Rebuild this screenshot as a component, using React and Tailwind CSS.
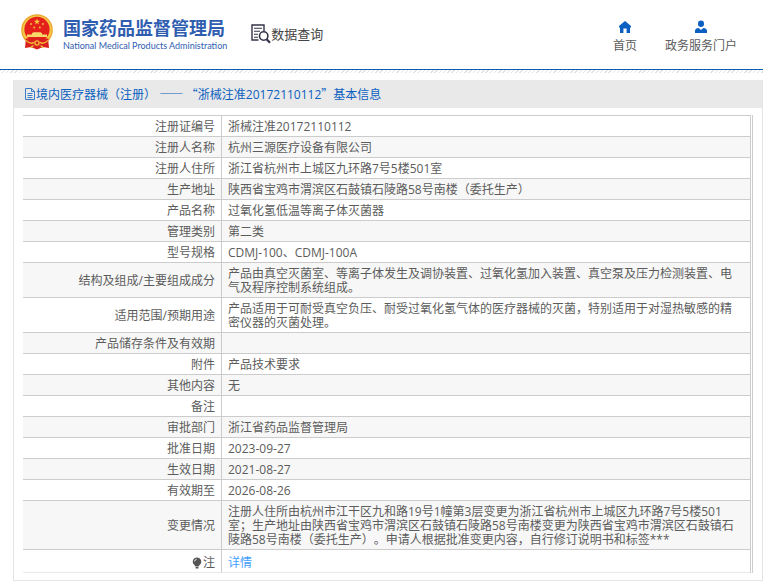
import { clsx } from 'clsx';

const NUMBER = '浙械注准20172110112';

const ROWS = [
  { label: '注册证编号', value: NUMBER },
  { label: '注册人名称', value: '杭州三源医疗设备有限公司' },
  { label: '注册人住所', value: '浙江省杭州市上城区九环路7号5楼501室' },
  { label: '生产地址', value: '陕西省宝鸡市渭滨区石鼓镇石陵路58号南楼（委托生产）' },
  { label: '产品名称', value: '过氧化氢低温等离子体灭菌器' },
  { label: '管理类别', value: '第二类' },
  { label: '型号规格', value: 'CDMJ-100、CDMJ-100A' },
  {
    label: '结构及组成/主要组成成分',
    value:
      '产品由真空灭菌室、等离子体发生及调协装置、过氧化氢加入装置、真空泵及压力检测装置、电气及程序控制系统组成。',
  },
  {
    label: '适用范围/预期用途',
    value:
      '产品适用于可耐受真空负压、耐受过氧化氢气体的医疗器械的灭菌，特别适用于对湿热敏感的精密仪器的灭菌处理。',
  },
  { label: '产品储存条件及有效期', value: '' },
  { label: '附件', value: '产品技术要求' },
  { label: '其他内容', value: '无' },
  { label: '备注', value: '' },
  { label: '审批部门', value: '浙江省药品监督管理局' },
  { label: '批准日期', value: '2023-09-27' },
  { label: '生效日期', value: '2021-08-27' },
  { label: '有效期至', value: '2026-08-26' },
  {
    label: '变更情况',
    value:
      '注册人住所由杭州市江干区九和路19号1幢第3层变更为浙江省杭州市上城区九环路7号5楼501室；生产地址由陕西省宝鸡市渭滨区石鼓镇石陵路58号南楼变更为陕西省宝鸡市渭滨区石鼓镇石陵路58号南楼（委托生产）。申请人根据批准变更内容，自行修订说明书和标签***',
  },
];

function Emblem() {
  return (
    <svg viewBox="0 0 32 36" className="h-9 w-8 shrink-0" aria-hidden="true">
      <path d="M5 24 L4 34 L10 33 L16 35.4 L22 33 L28 34 L27 24 Z" fill="#d9201c" />
      <circle cx="16" cy="16" r="15.8" fill="#e9a72c" />
      <circle cx="16" cy="16" r="14.6" fill="#f5c747" />
      <circle cx="16" cy="15.4" r="12.6" fill="#e3201b" />
      <path
        d="M16 4.6l.8 2.2h2.3l-1.9 1.4.7 2.2-1.9-1.3-1.9 1.3.7-2.2-1.9-1.4h2.3z"
        fill="#f7cf3f"
      />
      <g fill="#f3b93a">
        <circle cx="10" cy="10" r="1" />
        <circle cx="22" cy="10" r="1" />
        <circle cx="13.2" cy="13.4" r="1" />
        <circle cx="18.8" cy="13.4" r="1" />
      </g>
      <path d="M11 20.4v-1.2l1.5-1h7l1.5 1v1.2h5v2.6H6v-2.6z" fill="#f8d869" />
      <path d="M4.6 24.4h22.8l-1 7.6-10.4 2-10.4-2z" fill="#d9201c" />
      <circle cx="16" cy="29" r="2.8" fill="#f3b93a" />
      <circle cx="16" cy="29" r="1.4" fill="#d9201c" />
      <path
        d="M5 26.4c3 3 6 3.4 8 2M27 26.4c-3 3-6 3.4-8 2M12.4 31.6l-3 2M19.6 31.6l3 2"
        fill="none"
        stroke="#f3b93a"
        strokeWidth="1.3"
      />
    </svg>
  );
}

function QueryIcon() {
  return (
    <svg viewBox="0 0 20 20" className="size-5 shrink-0" fill="none" stroke="#33334a" aria-hidden="true">
      <path d="M7.5 16H1V1h12v6" strokeWidth="1.4" />
      <path d="M3 4.2h8M3 7.2h6M3 10.2h4M3 13.2h4" strokeWidth="1.1" />
      <circle cx="12.7" cy="12" r="4.2" strokeWidth="1.6" />
      <path d="M15.6 15.2l3.4 3.6" strokeWidth="2.2" />
    </svg>
  );
}

function HomeIcon() {
  return (
    <svg viewBox="0 0 14 14" className="size-3.5" fill="#0a5fc0" aria-hidden="true">
      <path d="M7 1L1 6v1.4h1V13h3.4V8.6h3.2V13H12V7.4h1V6z" />
    </svg>
  );
}

function UserIcon() {
  return (
    <svg viewBox="0 0 14 14" className="size-3.5" fill="#0a5fc0" aria-hidden="true">
      <ellipse cx="7" cy="3.8" rx="3" ry="3.3" />
      <path d="M1 13v-2.2c0-1.7 1.6-2.6 3.6-2.8L7 10l2.4-2c2 .2 3.6 1.1 3.6 2.8V13z" />
    </svg>
  );
}

function DocIcon() {
  return (
    <svg viewBox="0 0 12 12" className="size-3 shrink-0" fill="none" stroke="#3a7cc8" aria-hidden="true">
      <path d="M1.5.5h6l3 3v8h-9z" />
      <path d="M7.5.5v3h3M3.5 5.5h5M3.5 7.5h5M3.5 9.5h5" />
    </svg>
  );
}

function BulbIcon() {
  return (
    <svg viewBox="0 0 10 12" className="h-3 w-2.5" aria-hidden="true">
      <path d="M5 .5a4.2 4.2 0 0 0-2.6 7.5L3.4 9.5h3.2L7.6 8A4.2 4.2 0 0 0 5 .5zM3.6 10h2.8v1.4H3.6z" fill="#555" />
      <path d="M2.6 4.4A2.4 2.4 0 0 1 4.6 2.3" fill="none" stroke="#fff" strokeWidth=".9" />
    </svg>
  );
}

function Header() {
  return (
    <header>
      <div className="flex h-[70px] justify-between border-b border-[#0a5fb4] pr-[26px] pl-[21px]">
        <div className="flex items-start">
          <a href="#" className="flex items-start gap-2.5 pt-3.5">
            <Emblem />
            <span className="flex flex-col pt-0.5 text-[#2f5db0]">
              <span className="text-[18px] leading-6 font-bold">国家药品监督管理局</span>
              <span className="font-[Lato,sans-serif] text-[9px] leading-3">
                National Medical Products Administration
              </span>
            </span>
          </a>
          <a href="#" className="ml-6 flex items-center pt-6 text-[13px] leading-5 text-[#444]">
            <QueryIcon />
            数据查询
          </a>
        </div>
        <nav className="flex items-start gap-7 pt-5 text-[12px] leading-4">
          <a href="#" className="flex flex-col items-center gap-1">
            <HomeIcon />
            首页
          </a>
          <a href="#" className="flex flex-col items-center gap-1">
            <UserIcon />
            政务服务门户
          </a>
        </nav>
      </div>
      <div className="h-[3px] bg-[repeating-linear-gradient(135deg,#e2e2e2_0_1px,#fff_1px_3px)]" />
    </header>
  );
}

function Row({ label, value, striped }) {
  return (
    <tr className={clsx(striped && 'bg-[#f7f7f7]')}>
      <th
        scope="row"
        className="w-[199px] border-t border-r border-[#ccc] px-1.5 pt-1 pb-0.5 text-right font-normal"
      >
        {label}
      </th>
      <td className="h-[21px] border-t border-[#ccc] pt-1 pr-2 pb-0.5 pl-1.5">{value}</td>
    </tr>
  );
}

export default function App() {
  return (
    <div
      lang="zh-CN"
      className="min-h-screen bg-white pb-2 font-['Open_Sans','Noto_Sans_CJK_SC',sans-serif] text-[12px] leading-[14px] text-[#5c5c5c] [text-spacing-trim:space-all]"
    >
      <Header />
      <main className="mt-[7px] ml-[13px] border border-t-0 border-[#e5e5e5]">
        <h1 className="flex h-7 items-center bg-[#e9e9e9] pl-2.5 text-[#0a5fc0]">
          <DocIcon />
          <span>
            境内医疗器械（注册） <span className="font-['Noto_Sans_CJK_SC',sans-serif]">—— “</span>
            {NUMBER}
            <span className="font-['Noto_Sans_CJK_SC',sans-serif]">”</span>基本信息
          </span>
        </h1>
        <div className="mx-[9px] my-[7px] border-r-[3px] border-double border-[#ccc]">
          <table className="w-full border-separate border-spacing-0">
            <tbody>
              {ROWS.map((row, i) => (
                <Row key={row.label} {...row} striped={i % 2 === 1} />
              ))}
              <tr>
                <th
                  scope="row"
                  className="border-t border-r border-b border-[#ccc] border-b-[#e9e9f0] px-1.5 pt-1.5 pb-0.5 text-right font-normal"
                >
                  <span className="flex items-center justify-end gap-px">
                    <BulbIcon />注
                  </span>
                </th>
                <td className="border-t border-b border-[#ccc] border-b-[#e9e9f0] pt-1.5 pr-2 pb-0.5 pl-1.5">
                  <a href="#" className="text-[#409eff]">
                    详情
                  </a>
                </td>
              </tr>
            </tbody>
          </table>
        </div>
      </main>
    </div>
  );
}
